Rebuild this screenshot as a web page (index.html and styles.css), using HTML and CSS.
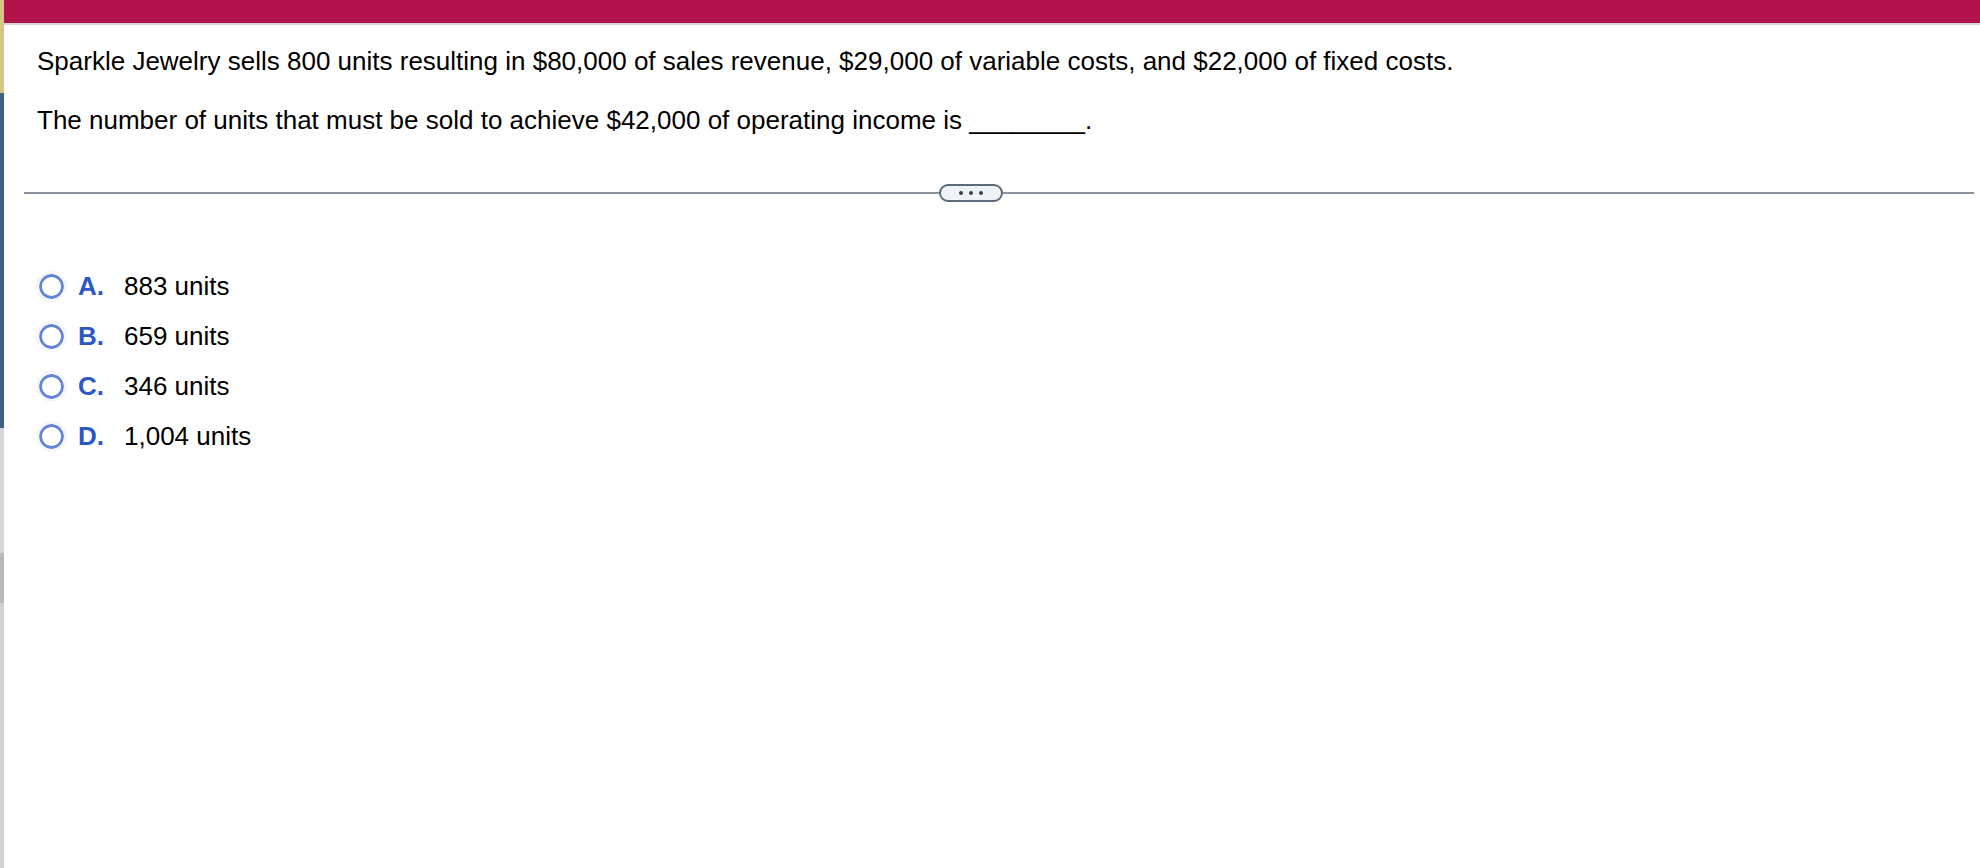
FILE: index.html
```html
<!DOCTYPE html>
<html>
<head>
<meta charset="utf-8">
<title>Question</title>
<link rel="stylesheet" href="styles.css">
</head>
<body>
<div class="page">
  <div class="edge">
    <div class="edge-yellow"></div>
    <div class="edge-blue"></div>
    <div class="edge-grey-a"></div>
    <div class="edge-grey-b"></div>
    <div class="edge-grey-c"></div>
  </div>
  <div class="main">
    <div class="topbar"></div>
    <div class="question">
      <p>Sparkle Jewelry sells 800 units resulting in $80,000 of sales revenue, $29,000 of variable costs, and $22,000 of fixed costs.</p>
      <p>The number of units that must be sold to achieve $42,000 of operating income is ________.</p>
    </div>
    <div class="divider">
      <span class="rule rule-left"></span>
      <span class="pill"><i class="dot"></i><i class="dot"></i><i class="dot"></i></span>
      <span class="rule rule-right"></span>
    </div>
    <ul class="options">
      <li class="option">
        <svg class="radio" viewBox="0 0 25 25"><circle cx="12.5" cy="12.5" r="11"/></svg>
        <span class="letter">A.</span><span class="answer">883 units</span>
      </li>
      <li class="option">
        <svg class="radio" viewBox="0 0 25 25"><circle cx="12.5" cy="12.5" r="11"/></svg>
        <span class="letter">B.</span><span class="answer">659 units</span>
      </li>
      <li class="option">
        <svg class="radio" viewBox="0 0 25 25"><circle cx="12.5" cy="12.5" r="11"/></svg>
        <span class="letter">C.</span><span class="answer">346 units</span>
      </li>
      <li class="option">
        <svg class="radio" viewBox="0 0 25 25"><circle cx="12.5" cy="12.5" r="11"/></svg>
        <span class="letter">D.</span><span class="answer">1,004 units</span>
      </li>
    </ul>
  </div>
</div>
</body>
</html>
```

FILE: styles.css
```css
html, body {
  margin: 0;
  padding: 0;
  background: #ffffff;
}

body {
  font-family: "Liberation Sans", Arial, sans-serif;
  color: #000000;
}

.page {
  display: flex;
  width: 1980px;
  height: 868px;
  overflow: hidden;
}

.edge {
  width: 4px;
  flex: 0 0 4px;
  display: flex;
  flex-direction: column;
}

.edge-yellow {
  height: 93px;
  background: #d5c587;
}

.edge-blue {
  height: 335px;
  background: #3f6286;
}

.edge-grey-a {
  height: 125px;
  background: #d6d6d6;
}

.edge-grey-b {
  height: 50px;
  background: #b9b9b9;
}

.edge-grey-c {
  flex: 1;
  background: #d2d2d2;
}

.main {
  flex: 1;
  display: flex;
  flex-direction: column;
}

.topbar {
  height: 23px;
  background: #b01249;
  border-bottom: 2px solid #d4d4da;
}

.question {
  padding: 21px 0 0 33px;
}

.question p {
  margin: 0;
  font-size: 26px;
  line-height: 30px;
}

.question p + p {
  margin-top: 29px;
}

.divider {
  display: flex;
  align-items: center;
  margin-top: 49px;
  padding: 0 6px 0 20px;
  height: 18px;
}

.rule {
  height: 2px;
  background: #8a929d;
}

.rule-left {
  width: 915px;
}

.rule-right {
  flex: 1;
}

.pill {
  box-sizing: border-box;
  width: 64px;
  height: 18px;
  border: 2px solid #5c6b7a;
  border-radius: 9px;
  background: #f0f3f5;
  display: flex;
  align-items: center;
  justify-content: center;
  gap: 6px;
}

.dot {
  width: 4px;
  height: 4px;
  border-radius: 50%;
  background: #3f3f3f;
}

.options {
  list-style: none;
  margin: 69px 0 0 0;
  padding: 0 0 0 35px;
  display: flex;
  flex-direction: column;
  gap: 20px;
}

.option {
  display: flex;
  align-items: center;
  height: 30px;
  font-size: 26px;
  line-height: 30px;
}

.radio {
  width: 25px;
  height: 25px;
  margin-right: 14px;
  flex: 0 0 25px;
  border-radius: 50%;
  box-shadow: 0 0 0 3px #f6f6f8;
}

.radio circle {
  fill: #ffffff;
  stroke: #6284d8;
  stroke-width: 2.8;
}

.letter {
  width: 46px;
  font-weight: bold;
  color: #2c58c4;
}
```
